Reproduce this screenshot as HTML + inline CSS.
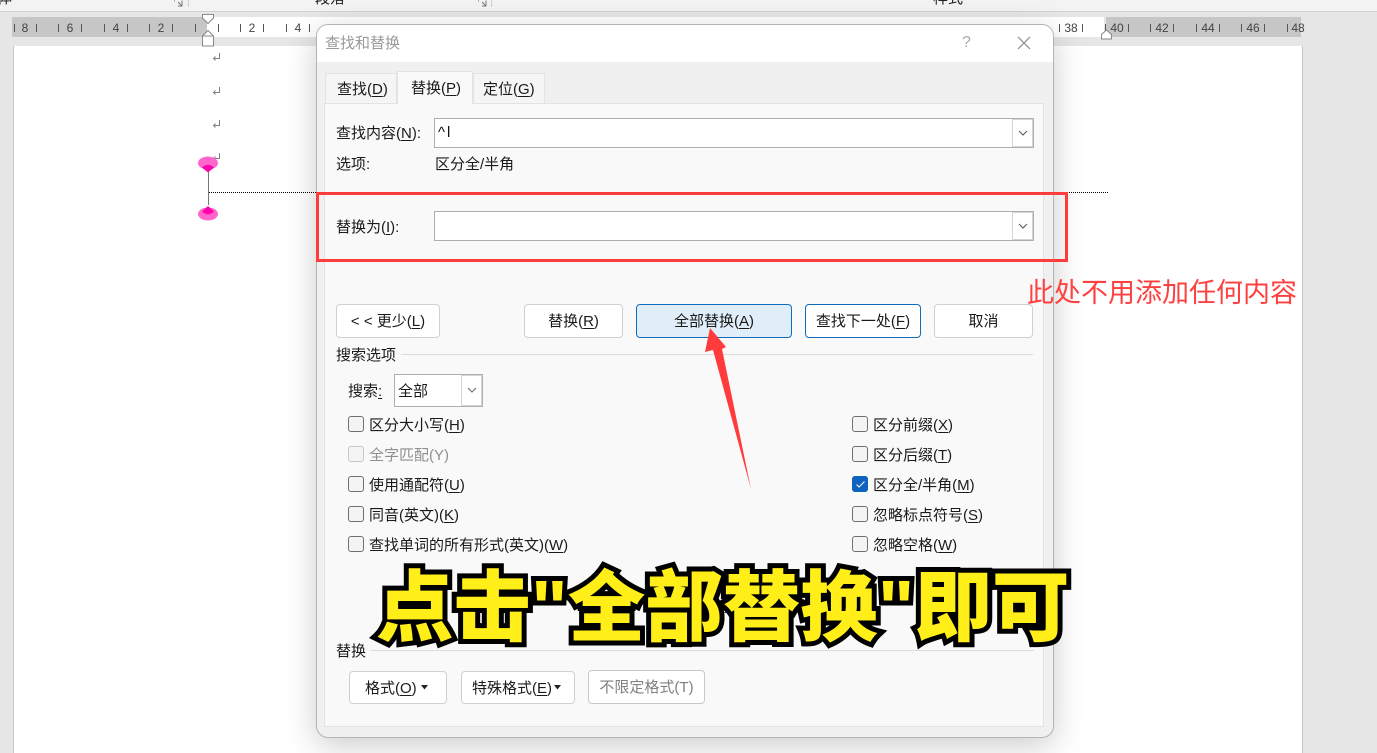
<!DOCTYPE html>
<html lang="zh"><head><meta charset="utf-8"><title>查找和替换</title>
<style>
html,body{margin:0;padding:0;width:1377px;height:753px;overflow:hidden;background:#e6e6e6}
body{position:relative;font-family:"Liberation Sans","Noto Sans CJK SC",sans-serif;color:#111}
.a{position:absolute}
.t{position:absolute;white-space:nowrap;font-size:15px;line-height:20px;color:#1a1a1a;margin-top:1px}
.r{position:absolute;top:21px;font-size:12px;line-height:14px;color:#444;width:24px;text-align:center}
.k{position:absolute;top:24px;width:1px;height:8px;background:#555}
.btn{position:absolute;box-sizing:border-box;background:#fff;border:1px solid #d0d0d0;border-radius:4px;text-align:center;font-size:15px;color:#1a1a1a;white-space:nowrap}
.cb{position:absolute;box-sizing:border-box;width:16px;height:16px;border:1px solid #6f6f6f;border-radius:3px;background:#f4f4f4}
.inp{position:absolute;box-sizing:border-box;left:434px;width:600px;height:30px;background:#fff;border:1px solid #aeaeb4}
.dd{position:absolute;right:0;top:0;box-sizing:border-box;width:21px;height:28px;border:1px solid #d4d4d4;background:#fff}
u{text-underline-offset:2px}
</style></head><body>
<div class="a" style="left:0;top:0;width:1377px;height:11px;background:#f3f3f3;border-bottom:1px solid #d2d2d2;overflow:hidden">
<div class="t" style="left:-3px;top:-12px;color:#222">体</div>
<div class="t" style="left:315px;top:-12px;color:#222">段落</div>
<div class="t" style="left:933px;top:-12px;color:#222">样式</div>
<div class="a" style="left:188px;top:0;width:1px;height:7px;background:#ccc"></div>
<div class="a" style="left:491px;top:0;width:1px;height:7px;background:#ccc"></div>
<svg class="a" style="left:173px;top:0" width="12" height="8" fill="none" stroke="#777"><path d="M1 1H2M9 .5V6H5M5 2 9 6"/></svg>
<svg class="a" style="left:477px;top:0" width="12" height="8" fill="none" stroke="#777"><path d="M1 1H2M9 .5V6H5M5 2 9 6"/></svg>
</div>
<div class="a" style="left:12px;top:17px;width:195px;height:20px;background:#c6c6c6"></div>
<div class="a" style="left:207px;top:17px;width:897px;height:20px;background:#fff"></div>
<div class="a" style="left:1106px;top:17px;width:195px;height:20px;background:#c6c6c6"></div>
<div class="k" style="left:14px"></div><div class="r" style="left:13px">8</div><div class="k" style="left:36px"></div>
<div class="k" style="left:58px"></div><div class="r" style="left:58px">6</div><div class="k" style="left:81px"></div>
<div class="k" style="left:104px"></div><div class="r" style="left:104px">4</div><div class="k" style="left:127px"></div>
<div class="k" style="left:149px"></div><div class="r" style="left:149px">2</div><div class="k" style="left:172px"></div>
<div class="k" style="left:195px"></div>
<div class="k" style="left:218px"></div><div class="k" style="left:240px"></div><div class="r" style="left:240px">2</div><div class="k" style="left:263px"></div>
<div class="k" style="left:286px"></div><div class="r" style="left:286px">4</div><div class="k" style="left:309px"></div>
<div class="k" style="left:1059px"></div><div class="r" style="left:1059px">38</div><div class="k" style="left:1082px"></div>
<div class="k" style="left:1105px"></div><div class="r" style="left:1105px">40</div><div class="k" style="left:1128px"></div>
<div class="k" style="left:1150px"></div><div class="r" style="left:1150px">42</div><div class="k" style="left:1173px"></div>
<div class="k" style="left:1196px"></div><div class="r" style="left:1196px">44</div><div class="k" style="left:1219px"></div>
<div class="k" style="left:1241px"></div><div class="r" style="left:1241px">46</div><div class="k" style="left:1264px"></div>
<div class="k" style="left:1287px"></div><div class="r" style="left:1286px">48</div>
<div class="a" style="left:13px;top:46px;width:1288px;height:707px;background:#fff;border-left:1px solid #c6c6c6;border-right:1px solid #c6c6c6"></div>
<svg class="a" style="left:200px;top:13px" width="16" height="34" fill="#fff" stroke="#888"><path d="M2.500 1.500H13.500V5L8 10.500 2.500 5Z"/><path d="M8 17.500 13.500 23V33H2.500V23Z"/><path d="M2.500 23H13.500"/></svg>
<svg class="a" style="left:1100px;top:29px" width="14" height="12" fill="#fff" stroke="#888"><path d="M1.500 5.500 6.500 1 11.500 5.500V10H1.500Z"/></svg>
<svg class="a" style="left:210px;top:49px" width="14" height="120" fill="none" stroke="#808080"><path d="M9.500 4V9.500H3.500M5.500 7.500 3.500 9.500 5.500 11.500"/><path d="M9.500 38V43.500H3.500M5.500 41.500 3.500 43.500 5.500 45.500"/><path d="M9.500 71V76.500H3.500M5.500 74.500 3.500 76.500 5.500 78.500"/><path d="M9.500 104V109.500H3.500M5.500 107.500 3.500 109.500 5.500 111.500"/></svg>
<div class="a" style="left:209px;top:192px;width:899px;border-top:1px dotted #000"></div>
<div class="a" style="left:208px;top:172px;width:1px;height:33px;background:#777"></div>
<svg class="a" style="left:197px;top:155px" width="22" height="68"><ellipse cx="11" cy="8" rx="10" ry="6.500" fill="#ff66cc"/><path d="M5 12.500Q11 7 17 12.500L11 17.500Z" fill="#ff00aa"/><ellipse cx="11" cy="59" rx="10" ry="6.500" fill="#ff66cc"/><path d="M5 56.500 11 51 17 56.500Q11 62 5 56.500Z" fill="#ff00aa"/></svg>

<div class="a" style="left:316px;top:24px;width:738px;height:714px;box-sizing:border-box;background:#f0f0f0;border:1px solid #b4b4b4;border-radius:12px;box-shadow:0 8px 32px rgba(0,0,0,.2);overflow:hidden">
<div class="a" style="left:0;top:0;width:736px;height:37px;background:#fff"></div>
</div>
<div class="t" style="left:325px;top:33px;color:#9a9a9a">查找和替换</div>
<div class="t" style="left:962px;top:32px;color:#aaa;font-size:16px">?</div>
<svg class="a" style="left:1017px;top:36px" width="14" height="14" stroke="#8a8a8a" stroke-width="1.200"><path d="M1 1 13 13M13 1 1 13"/></svg>
<div class="a" style="left:325px;top:73px;width:72px;height:31px;box-sizing:border-box;background:#f5f5f5;border:1px solid #e3e3e3"></div>
<div class="a" style="left:473px;top:73px;width:72px;height:31px;box-sizing:border-box;background:#f5f5f5;border:1px solid #e3e3e3"></div>
<div class="a" style="left:324px;top:103px;width:720px;height:624px;box-sizing:border-box;background:#f9f9f9;border:1px solid #e3e3e3"></div>
<div class="a" style="left:397px;top:71px;width:76px;height:33px;box-sizing:border-box;background:#f9f9f9;border:1px solid #e3e3e3;border-bottom:0"></div>
<div class="t" style="left:337px;top:79px">查找(<u>D</u>)</div>
<div class="t" style="left:411px;top:78px">替换(<u>P</u>)</div>
<div class="t" style="left:483px;top:79px">定位(<u>G</u>)</div>

<div class="t" style="left:336px;top:123px">查找内容(<u>N</u>):</div>
<div class="inp" style="top:118px"><div class="t" style="left:3px;top:3px;color:#111;letter-spacing:2px">^l</div><div class="dd"><svg class="a" style="left:4px;top:10px" width="12" height="7" fill="none" stroke="#555"><path d="M2 1 6 5 10 1"/></svg></div></div>
<div class="t" style="left:336px;top:154px">选项:</div>
<div class="t" style="left:435px;top:154px">区分全/半角</div>
<div class="t" style="left:336px;top:217px">替换为(<u>I</u>):</div>
<div class="inp" style="top:211px"><div class="dd"><svg class="a" style="left:4px;top:10px" width="12" height="7" fill="none" stroke="#555"><path d="M2 1 6 5 10 1"/></svg></div></div>

<div class="btn" style="left:336px;top:304px;width:104px;height:34px;line-height:34px">&lt; &lt; 更少(<u>L</u>)</div>
<div class="btn" style="left:524px;top:304px;width:99px;height:34px;line-height:34px">替换(<u>R</u>)</div>
<div class="btn" style="left:636px;top:304px;width:156px;height:34px;line-height:34px;background:#e0eef9;border-color:#0f6cbd">全部替换(<u>A</u>)</div>
<div class="btn" style="left:805px;top:304px;width:116px;height:34px;line-height:34px;border-color:#0f6cbd">查找下一处(<u>F</u>)</div>
<div class="btn" style="left:934px;top:304px;width:99px;height:34px;line-height:34px">取消</div>

<div class="t" style="left:336px;top:345px">搜索选项</div>
<div class="a" style="left:401px;top:354px;width:632px;height:1px;background:#dcdcdc"></div>
<div class="t" style="left:348px;top:381px">搜索<u>:</u></div>
<div class="a" style="left:394px;top:374px;width:89px;height:33px;box-sizing:border-box;background:#fff;border:1px solid #aeaeb4"></div>
<div class="a" style="left:461px;top:375px;width:21px;height:31px;box-sizing:border-box;border:1px solid #d4d4d4;background:#fff"><svg class="a" style="left:4px;top:11px" width="12" height="7" fill="none" stroke="#666"><path d="M2 1 6 5 10 1"/></svg></div>
<div class="t" style="left:398px;top:381px">全部</div>

<div class="cb" style="left:348px;top:416px"></div><div class="t" style="left:369px;top:415px">区分大小写(<u>H</u>)</div>
<div class="cb" style="left:348px;top:446px;border-color:#c8c8c8"></div><div class="t" style="left:369px;top:445px;color:#8f8f8f">全字匹配(Y)</div>
<div class="cb" style="left:348px;top:476px"></div><div class="t" style="left:369px;top:475px">使用通配符(<u>U</u>)</div>
<div class="cb" style="left:348px;top:506px"></div><div class="t" style="left:369px;top:505px">同音(英文)(<u>K</u>)</div>
<div class="cb" style="left:348px;top:536px"></div><div class="t" style="left:369px;top:535px">查找单词的所有形式(英文)(<u>W</u>)</div>

<div class="cb" style="left:852px;top:416px"></div><div class="t" style="left:873px;top:415px">区分前缀(<u>X</u>)</div>
<div class="cb" style="left:852px;top:446px"></div><div class="t" style="left:873px;top:445px">区分后缀(<u>T</u>)</div>
<div class="cb" style="left:852px;top:476px;background:#0f62be;border-color:#0f62be"><svg class="a" style="left:2px;top:3px" width="11" height="9" fill="none" stroke="#fff"><path d="M1.500 4.500 4 7 9.500 1.500"/></svg></div><div class="t" style="left:873px;top:475px">区分全/半角(<u>M</u>)</div>
<div class="cb" style="left:852px;top:506px"></div><div class="t" style="left:873px;top:505px">忽略标点符号(<u>S</u>)</div>
<div class="cb" style="left:852px;top:536px"></div><div class="t" style="left:873px;top:535px">忽略空格(<u>W</u>)</div>

<div class="t" style="left:336px;top:641px">替换</div>
<div class="a" style="left:371px;top:650px;width:663px;height:1px;background:#dcdcdc"></div>
<div class="btn" style="left:349px;top:671px;width:98px;height:33px;line-height:33px;text-align:left;padding-left:15px">格式(<u>O</u>)</div>
<svg class="a" style="left:420px;top:685px" width="9" height="5"><path d="M1 0H8L4.500 4.500Z" fill="#222"/></svg>
<div class="btn" style="left:461px;top:671px;width:114px;height:33px;line-height:33px;text-align:left;padding-left:10px">特殊格式(<u>E</u>)</div>
<svg class="a" style="left:553px;top:685px" width="9" height="5"><path d="M1 0H8L4.500 4.500Z" fill="#222"/></svg>
<div class="btn" style="left:588px;top:670px;width:117px;height:34px;line-height:34px;color:#808080;border-color:#c8c8c8">不限定格式(T)</div>

<div class="a" style="left:316px;top:192px;width:752px;height:70px;box-sizing:border-box;border:3px solid #ff3b3b"></div>
<div class="t" style="left:1027px;top:276px;font-size:27px;line-height:32px;color:#ff4040">此处不用添加任何内容</div>
<svg class="a" style="left:700px;top:320px" width="60" height="175"><path d="M10 8 26 27 22 29 51 169 13 30 5 32Z" fill="#ff3b3b"/></svg>

<svg class="a" style="left:360px;top:540px" width="730" height="125"><text x="16" y="94.500" font-family="'Liberation Sans','Noto Sans CJK SC',sans-serif" font-weight="900" font-size="77.500" fill="#ffee17" stroke="#000" stroke-width="10" stroke-linejoin="miter" stroke-miterlimit="3" paint-order="stroke fill">点击"全部替换"即可</text></svg>
</body></html>
